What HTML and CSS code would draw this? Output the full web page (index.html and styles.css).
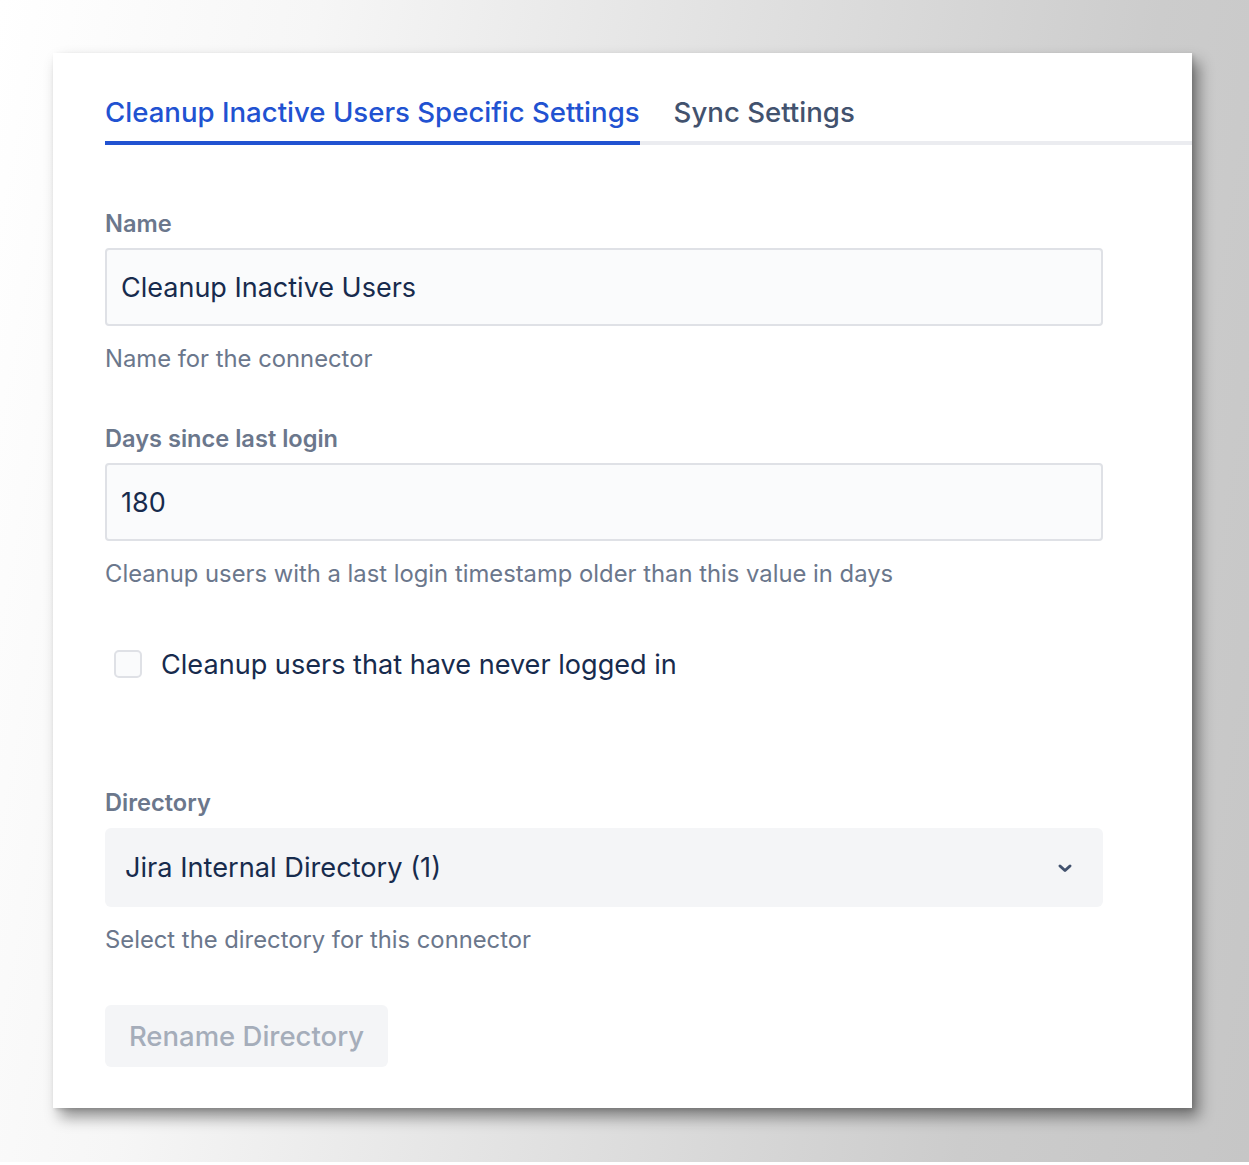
FILE: index.html
```html
<!DOCTYPE html>
<html lang="en">
<head>
<meta charset="utf-8">
<title>Cleanup Inactive Users</title>
<link rel="stylesheet" href="styles.css">
</head>
<body>
<div class="stage">
  <div class="card">
    <nav class="tabs">
      <div class="tab tab-active">Cleanup Inactive Users Specific Settings</div>
      <div class="tab">Sync Settings</div>
    </nav>
    <form class="form">
      <div class="field field-first">
        <label class="label">Name</label>
        <div class="input">Cleanup Inactive Users</div>
        <div class="help">Name for the connector</div>
      </div>
      <div class="field">
        <label class="label">Days since last login</label>
        <div class="input">180</div>
        <div class="help">Cleanup users with a last login timestamp older than this value in days</div>
      </div>
      <div class="check-row">
        <span class="checkbox"></span>
        <span class="check-label">Cleanup users that have never logged in</span>
      </div>
      <div class="field field-dir">
        <label class="label">Directory</label>
        <div class="select">
          <span>Jira Internal Directory (1)</span>
          <svg class="chevron" width="20" height="20" viewBox="0 0 20 20"><path d="M5 8 L10 12.5 L15 8" fill="none" stroke="#42526e" stroke-width="3" stroke-linecap="round" stroke-linejoin="round"/></svg>
        </div>
        <div class="help">Select the directory for this connector</div>
      </div>
      <div class="button">Rename Directory</div>
    </form>
  </div>
</div>
</body>
</html>
```
FILE: styles.css
```css
html { background: #ffffff; }
body {
  margin: 0;
  font-family: "Inter", "Noto Sans", sans-serif;
  color: #172b4d;
}
.stage {
  height: 1162px;
  box-sizing: border-box;
  padding: 53px 57px 0 53px;
  background: linear-gradient(100deg, #ffffff 0%, #f6f6f6 22%, #dedede 55%, #cccccc 80%, #c6c6c6 100%);
}
.card {
  width: 1139px;
  height: 1055px;
  box-sizing: border-box;
  background: #ffffff;
  padding: 0 0 0 52px;
  box-shadow: 7px 9px 14px rgba(0, 0, 0, 0.42), 2px 2px 4px rgba(0,0,0,0.12);
}
.tabs {
  display: flex;
  padding-top: 43px;
  border-bottom: 4px solid #ebecf0;
  gap: 34px;
}
.tab {
  font-size: 27.6px;
  font-weight: 500;
  line-height: 32px;
  padding-bottom: 13px;
  color: #42526e;
  margin-bottom: -4px;
  border-bottom: 4px solid transparent;
}
.tab-active {
  color: #2152d1;
  border-bottom-color: #2152d1;
}
.form {
  width: 998px;
  display: flex;
  flex-direction: column;
}
.field { display: flex; flex-direction: column; margin-top: 56px; }
.field-first { margin-top: 67px; }
.field-dir { margin-top: 111px; }
.label {
  font-size: 23.6px;
  font-weight: 600;
  line-height: 24px;
  color: #6b778c;
}
.input {
  margin-top: 12px;
  height: 78px;
  box-sizing: border-box;
  border: 2px solid #dfe1e6;
  border-radius: 4px;
  background: #fafbfc;
  padding: 0 14px;
  display: flex;
  align-items: center;
  font-size: 27px;
  color: #172b4d;
}
.help {
  margin-top: 21px;
  font-size: 23.8px;
  line-height: 24px;
  color: #6b778c;
}
.check-row {
  margin-top: 62px;
  height: 32px;
  display: flex;
  align-items: center;
  padding-left: 9px;
}
.checkbox {
  width: 28px;
  height: 28px;
  box-sizing: border-box;
  border: 2px solid #dfe1e6;
  border-radius: 5px;
  background: #fafbfc;
}
.check-label {
  margin-left: 19px;
  font-size: 27.1px;
  color: #172b4d;
}
.select {
  margin-top: 13px;
  height: 79px;
  border-radius: 6px;
  background: #f4f5f7;
  display: flex;
  align-items: center;
  justify-content: space-between;
  padding: 0 28px 0 20px;
  font-size: 27.2px;
  color: #172b4d;
}
.chevron { display: block; }
.button {
  margin-top: 53px;
  align-self: flex-start;
  height: 62px;
  width: 283px;
  box-sizing: border-box;
  border-radius: 6px;
  background: #f4f5f7;
  display: flex;
  align-items: center;
  justify-content: center;
  font-size: 27.5px;
  font-weight: 500;
  color: #a5adba;
}
```
